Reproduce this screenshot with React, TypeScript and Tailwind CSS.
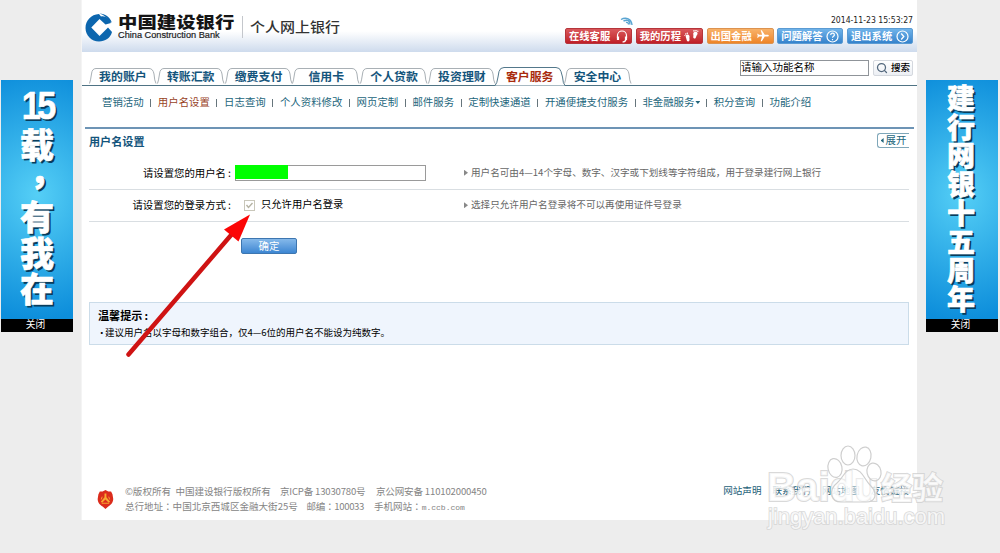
import type { ReactNode } from 'react';
import { Search } from 'lucide-react';
import { MdFlight } from 'react-icons/md';
import clsx from 'clsx';

const TABS = ['我的账户', '转账汇款', '缴费支付', '信用卡', '个人贷款', '投资理财', '客户服务', '安全中心'];

const SUB_MENU = [
  '营销活动',
  '用户名设置',
  '日志查询',
  '个人资料修改',
  '网页定制',
  '邮件服务',
  '定制快速通道',
  '开通便捷支付服务',
  '非金融服务',
  '积分查询',
  '功能介绍',
];

function Logo() {
  return (
    <svg className="w-7 h-[29px]" viewBox="0 0 28 29">
      <path
        d="M14 1C6 1.500 .5 7.500 .5 15c0 7.500 6 13.500 13.500 13.500 6 0 11.500-3.500 13-9.500l-4-4.500-8.500 8.500-8.200-8.500L14.500 6l6 5.500 5.500-1.500C24.500 6 20.500 2.500 16 3.500z"
        fill="#0c66ae"
      />
      <path d="M14.500 0.500C20 .5 25 4 26.800 9.500L23.500 8C22 4.500 19 1.800 14.500 0.500z" fill="#0c66ae" />
      <path d="M14.500 8l6.500 6.500-6.500 6.500-6.500-6.500z" fill="#fff" />
    </svg>
  );
}

function HeadsetIcon() {
  return (
    <svg className="w-[12px] h-[13px]" viewBox="0 0 12 13" fill="none" stroke="#fff">
      <path d="M1.500 8V5.500a4.500 4.500 0 0 1 9 0V8M10 9.500c-.5 1.800-2 2.500-3.500 2.500" strokeWidth="1.200" />
      <path d="M2 6.500v3.500M10 6.500v3.500" strokeWidth="2.200" />
    </svg>
  );
}

function FeetIcon() {
  return (
    <svg className="w-[15px] h-[12px]" viewBox="0 0 15 12" fill="#fff">
      <path d="M2 5.200c1.200-1.300 3.200-.5 3.500 1 .2 1.200-.3 1.500 0 2.800.3 1.500-.4 2.500-1.400 2.500S2.700 10.500 2.500 9.300C2.300 7.800 1.200 6.300 2 5.200z" />
      <path d="M9.500 2.700c1-1.500 3.500-1.200 4 .3.300 1.300-.8 2-1.200 3.200-.4 1.500-1 2.600-2.100 2.300-1.200-.3-1-1.600-.8-2.700.2-1.200-.6-2 .1-3.100z" />
      <circle cx=".9" cy="5.500" r=".6" />
      <circle cx="1.700" cy="4" r=".7" />
      <circle cx="3.300" cy="3.300" r=".8" />
      <circle cx="10" cy=".9" r=".8" />
      <circle cx="12" cy=".7" r=".8" />
      <circle cx="13.800" cy="1.300" r=".7" />
    </svg>
  );
}

function RingIcon({ children }: { children: ReactNode }) {
  return (
    <svg className="w-[13px] h-[13px]" viewBox="0 0 13 13" fill="none" stroke="#fff">
      <circle cx="6.500" cy="6.500" r="5.500" strokeWidth="1.200" />
      {children}
    </svg>
  );
}

const QUICK_LINKS = [
  { label: '在线客服', color: 'w-[67px] from-[#d9575b] to-[#c01d26] border-[#b5353b]', icon: <HeadsetIcon /> },
  { label: '我的历程', color: 'w-[67px] from-[#d9575b] to-[#c01d26] border-[#b5353b]', icon: <FeetIcon /> },
  {
    label: '出国金融',
    color: 'w-[67px] from-[#f8b268] to-[#ee8526] border-[#dc9350]',
    icon: <MdFlight className="w-[14px] h-[14px] rotate-90" />,
  },
  {
    label: '问题解答',
    color: 'w-[66px] from-[#70b4ea] to-[#3583cc] border-[#5b9bd3]',
    icon: (
      <RingIcon>
        <path d="M4.700 5c.1-2.500 3.700-2.500 3.700 0 0 1.300-1.900 1.300-1.900 2.800M6.500 9v1.200" strokeWidth="1.200" />
      </RingIcon>
    ),
  },
  {
    label: '退出系统',
    color: 'w-[66px] from-[#70b4ea] to-[#3583cc] border-[#5b9bd3]',
    icon: (
      <RingIcon>
        <path d="M5.200 3.500l2.600 3-2.600 3" strokeWidth="1.300" />
      </RingIcon>
    ),
  },
];

function Header() {
  return (
    <header className="h-[52px] flex justify-between bg-linear-to-b from-white from-60% to-[#cedbed]">
      <div className="flex pt-[13px] pl-[3px]">
        <Logo />
        <div className="ml-[5px] w-[117px]">
          <div className="mt-[1px] text-[19.400px] leading-[18px] h-[16px] font-black text-[#151515] origin-top scale-y-85">
            中国建设银行
          </div>
          <div className="font-['Liberation_Sans'] text-[9.200px] leading-[10px] text-[#222] [-webkit-text-stroke:0.2px_#222]">
            China Construction Bank
          </div>
        </div>
        <div className="mt-[3px] ml-[7px] w-px h-[22px] bg-[#c4c7cc]" />
        <div className="ml-[7px] mt-[5px] text-[15px] leading-[18px] font-medium text-[#333] origin-top scale-y-90">
          个人网上银行
        </div>
      </div>
      <div className="relative w-[352px] pr-1 pt-[14px]">
        <div className="text-right font-['DejaVu_Sans_Condensed','DejaVu_Sans'] text-[8.600px] leading-[13px] h-[14px] text-[#222]">
          2014-11-23 15:53:27
        </div>
        <svg className="absolute left-[55px] top-[17px] w-[13px] h-[9px]" viewBox="0 0 13 9" fill="none" stroke="#5aa5d2">
          <path d="M1 2.500C6-.5 11.500 2 12 8M3.500 4c4-2 6.500 0 6.500 3.500M6 5.500c1.500-.5 2.500.5 2.500 2" strokeWidth="1.400" />
        </svg>
        <div className="flex justify-between">
          {QUICK_LINKS.map((link) => (
            <a
              key={link.label}
              className={clsx(
                'h-4 flex items-center justify-between px-[3px] rounded-[2px] border bg-linear-to-b text-white font-bold text-[10.300px] leading-none whitespace-nowrap',
                link.color
              )}
            >
              {link.label}
              {link.icon}
            </a>
          ))}
        </div>
      </div>
    </header>
  );
}

function TabBar() {
  return (
    <div className="flex justify-between h-[34px] border-b border-[#4f7384]">
      <nav className="flex pl-[7px] pt-[15px]">
        {TABS.map((tab) => {
          const active = tab === '客户服务';
          return (
            <div key={tab} className="relative w-[67.800px] h-[20px]">
              <svg className="w-[68px] h-[19px] overflow-visible" viewBox="0 0 68 19">
                <path
                  d={
                    active
                      ? 'M-1 18.500Q1 17 2 10L3 4.500Q4 .5 8 .5H60Q64 .5 65 4.500L66.500 10Q67 17 69 18.500'
                      : 'M.5 16.500Q1.500 14 2.500 7Q3 1.500 7 1.500H60Q64 1.500 65 7Q65.500 14 67 16.500'
                  }
                  fill="#fff"
                  stroke={active ? '#53788b' : '#a9b0b5'}
                />
              </svg>
              <span
                className={clsx(
                  'absolute inset-x-0 top-[1px] text-center text-[11.900px] leading-[16px] font-bold',
                  active ? 'text-[#a82a0c]' : 'text-[#14557c]'
                )}
              >
                {tab}
              </span>
            </div>
          );
        })}
      </nav>
      <div className="flex gap-1 pr-1 pt-[8px]">
        <div className="w-[129px] h-4 border border-[#8f9499] text-[10.500px] leading-[12px] text-black">请输入功能名称</div>
        <div className="w-[40px] h-4 flex items-center justify-center gap-[3px] rounded-[2px] border border-[#d4d8de] bg-linear-to-b from-white to-[#eceff4] text-[9.500px] font-medium whitespace-nowrap">
          <Search className="w-3 h-3 text-[#53687d]" strokeWidth={2.500} />
          <span className="-mt-[2px]">搜索</span>
        </div>
      </div>
    </div>
  );
}

function SubMenu() {
  return (
    <nav className="flex h-[43px] mx-[3px] pl-[17px] pt-[8px] border-b-[2px] border-[#6d94b5] text-[10.400px] leading-[15px] text-[#23667c] whitespace-nowrap">
      {SUB_MENU.map((item, i) => (
        <span key={item} className="flex">
          {i > 0 && (
            <span className="w-[14.300px] flex justify-center pt-[5px]">
              <span className="w-px h-2 bg-[#66757c]" />
            </span>
          )}
          <span className={item === '用户名设置' ? 'text-[#98431f]' : ''}>{item}</span>
          {item === '非金融服务' && (
            <span className="mt-[7px] ml-[1px] mr-[-1px] w-[5px] h-[3px] bg-[#23667c] [clip-path:polygon(0_0,100%_0,50%_100%)]" />
          )}
        </span>
      ))}
    </nav>
  );
}

function FormRow({ label, hint, children }: { label: string; hint: string; children: ReactNode }) {
  return (
    <div className="flex items-center h-[32.500px] border-b border-[#d9dee2] text-[10.400px] whitespace-nowrap">
      <div className="w-[142px] text-right text-black">
        {label}
        <span className="inline-block w-[5px]">:</span>
      </div>
      <div className="w-[233px] flex items-center">{children}</div>
      <span className="w-[4px] h-[6px] mr-[3px] bg-[#888] [clip-path:polygon(0_0,100%_50%,0_100%)]" />
      <span className="-mt-[2px] text-[9.580px] text-[#666]">{hint}</span>
    </div>
  );
}

function SettingsForm() {
  return (
    <section className="pl-[7px] pr-2">
      <div className="flex justify-between h-[28px] pt-[4px]">
        <h2 className="text-[11.100px] leading-[17px] font-bold text-[#14557c]">用户名设置</h2>
        <div className="w-[32px] h-[15px] flex items-center justify-center gap-[2px] rounded-l-[3px] border border-r-0 border-[#7fa7b9] text-[10.400px] leading-none text-[#23667c]">
          <span className="w-[3px] h-[5px] bg-[#23667c] [clip-path:polygon(100%_0,100%_100%,0_50%)]" />
          展开
        </div>
      </div>
      <FormRow label="请设置您的用户名" hint="用户名可由4—14个字母、数字、汉字或下划线等字符组成，用于登录建行网上银行">
        <div className="ml-[4px] w-[191px] h-[16px] border border-[#9a9a9a]">
          <div className="-ml-px -mt-px w-[53px] h-[14px] bg-[#00ff00]" />
        </div>
      </FormRow>
      <FormRow label="请设置您的登录方式" hint="选择只允许用户名登录将不可以再使用证件号登录">
        <svg className="ml-[13px] mr-[6px] w-[11px] h-[11px]" viewBox="0 0 11 11" fill="none">
          <rect x=".5" y=".5" width="10" height="10" stroke="#c9c7ba" />
          <path d="M2.500 5l2 2.500 4-4.500" stroke="#b5b3a3" strokeWidth="1.400" />
        </svg>
        <span className="-mt-[3px] text-[10.300px] text-black">只允许用户名登录</span>
      </FormRow>
      <button className="block mt-[16px] ml-[152px] w-14 h-4 rounded-[2px] border border-[#3d76b0] bg-linear-to-b from-[#85b9ea] to-[#3c86d2] text-white text-[10.400px] leading-[14px]">
        确定
      </button>
      <div className="mt-[48px] h-[43px] pt-[4px] pl-[8px] border border-[#cbdce9] bg-[#eff5fd] text-black">
        <div className="text-[11.100px] leading-[16px] font-bold">
          温馨提示<span className="pl-[2px]">:</span>
        </div>
        <div className="flex text-[9.500px] leading-[18px]">
          <span className="w-[8px] -ml-px">·</span>建议用户名以字母和数字组合，仅4—6位的用户名不能设为纯数字。
        </div>
      </div>
    </section>
  );
}

function Footer() {
  return (
    <footer className="flex pl-[15px] pr-2 text-[9.550px] leading-[15px] text-[#858585] whitespace-nowrap">
      <svg className="mt-[5px] w-[17px] h-[21px]" viewBox="0 0 18 21">
        <path d="M9 .5l3 1.500h3l1.500 3 .8 5c0 4-3 6.500-5.300 8L9 20.500 6 18C3.500 16.500.7 14 .7 10l.8-5L3 2h3z" fill="#db2c1c" />
        <path d="M8 4h2v4l4 5-1.500 1L9 10.500 5.500 14 4 13l4-5z" fill="#f7a831" />
        <path d="M5 14.500h8M5.500 7.500l-1 3M12.500 7.500l1 3" stroke="#f7a831" />
      </svg>
      <div className="ml-[11px] w-[602px]">
        <div className="flex">
          <span className="w-[50.500px]">©版权所有</span>
          <span className="w-[104.500px]">中国建设银行版权所有</span>
          <span className="w-[96px] tracking-[-0.170px]">京ICP备 13030780号</span>
          <span className="tracking-[-0.150px]">京公网安备 110102000450</span>
        </div>
        <div className="flex font-['Noto_Sans_CJK_TC',sans-serif]" lang="zh-TW">
          <span className="w-[181.500px]">总行地址：中国北京西城区金融大街25号</span>
          <span className="w-[67.500px] tracking-[-0.300px]">邮编：100033</span>
          <span>
            手机网站：<span className="font-['Liberation_Mono'] text-[8px]">m.ccb.com</span>
          </span>
        </div>
      </div>
      <div className="flex -mt-[1px] gap-[11px] text-[#1c6078]">
        <span>网站声明</span>
        <span>联系我们</span>
        <span>网站地图</span>
        <span>友情链接</span>
      </div>
    </footer>
  );
}

function SideBanner({ className, children }: { className: string; children: ReactNode }) {
  return (
    <aside className={clsx('w-[72px] h-[252px] mt-20 flex flex-col shrink-0', className)}>
      <div className="h-[239px] flex flex-col items-center bg-[radial-gradient(ellipse_110px_125px_at_50%_48%,#55cff6,#0d8edb)] font-black text-white [text-shadow:2px_2px_0_#083c5c] [-webkit-text-stroke:0.6px_#fff]">
        {children}
      </div>
      <div className="h-[13px] pr-[3px] bg-black text-white text-center text-[9.700px] leading-[11px]">关闭</div>
    </aside>
  );
}

function Watermark() {
  return (
    <svg
      className="absolute left-[760px] top-[440px] w-[195px] h-[95px]"
      viewBox="0 0 195 95"
      fill="#fff"
      stroke="#cfcfcf"
      strokeWidth="1.200"
    >
      <g paintOrder="stroke" strokeWidth="2" fillOpacity=".8" strokeOpacity=".8">
        <text x="7" y="61" fontFamily="Liberation Sans" fontWeight="700" fontSize="40" textLength="112" lengthAdjust="spacingAndGlyphs">
          Baidu
        </text>
        <text x="121" y="59" fontFamily="Noto Sans CJK SC" fontWeight="700" fontSize="31">
          经验
        </text>
        <text x="8" y="84" fontFamily="Liberation Sans" fontSize="21.500" textLength="177" lengthAdjust="spacingAndGlyphs" strokeWidth="1.600">
          jingyan.baidu.com
        </text>
      </g>
      <g fillOpacity=".45">
        <ellipse cx="75" cy="28" rx="7" ry="9.500" transform="rotate(-12 75 28)" />
        <ellipse cx="88" cy="15.500" rx="7" ry="9.500" />
        <ellipse cx="104" cy="16.500" rx="7" ry="9.500" transform="rotate(12 104 16.500)" />
        <ellipse cx="114" cy="32" rx="7" ry="9" transform="rotate(-12 114 32)" />
        <path d="M77 43c6-5 8-14 16-14 9 0 11 10 17 16 9 9 5 17-4 17H81c-10 0-13-12-4-19z" />
      </g>
    </svg>
  );
}

function PointerArrow() {
  return (
    <svg className="absolute left-[120px] top-[205px] w-[140px] h-[155px]" viewBox="0 0 140 155">
      <path d="M8.500 149.500L112 29" stroke="#cf1313" strokeWidth="4.500" strokeLinecap="round" />
      <path d="M130 9.500L104 24.500 118.500 36.500z" fill="#fb0505" />
    </svg>
  );
}

function App() {
  return (
    <div className="relative flex w-[1000px] h-[553px] overflow-hidden bg-[#ededed] font-['Noto_Sans_CJK_SC',sans-serif]">
      <SideBanner className="ml-px">
        <div className="mt-[9px] text-[38px] leading-[34px] font-['Liberation_Sans'] font-bold tracking-[-4px] scale-x-90">15</div>
        <div className="mt-[3px] text-[34px] leading-[36px]">载</div>
        <div className="h-[36px] text-[34px] leading-[16px] pl-[19px]">，</div>
        <div className="text-[34px] leading-[36px]">有</div>
        <div className="text-[34px] leading-[36px]">我</div>
        <div className="text-[34px] leading-[36px]">在</div>
      </SideBanner>

      <main className="ml-[8px] w-[836px] h-[520px] bg-white shrink-0 border-l border-[#f4f4f4]">
        <Header />
        <TabBar />
        <SubMenu />
        <SettingsForm />
        <div className="h-[139px]" />
        <Footer />
      </main>

      <SideBanner className="ml-[9px]">
        <div className="pt-[3px] pr-[2px]">
          {[...'建行网银十五周年'].map((char) => (
            <div key={char} className="text-[28px] leading-[28.700px]">
              {char}
            </div>
          ))}
        </div>
      </SideBanner>

      <PointerArrow />
      <Watermark />
    </div>
  );
}

export default App;
